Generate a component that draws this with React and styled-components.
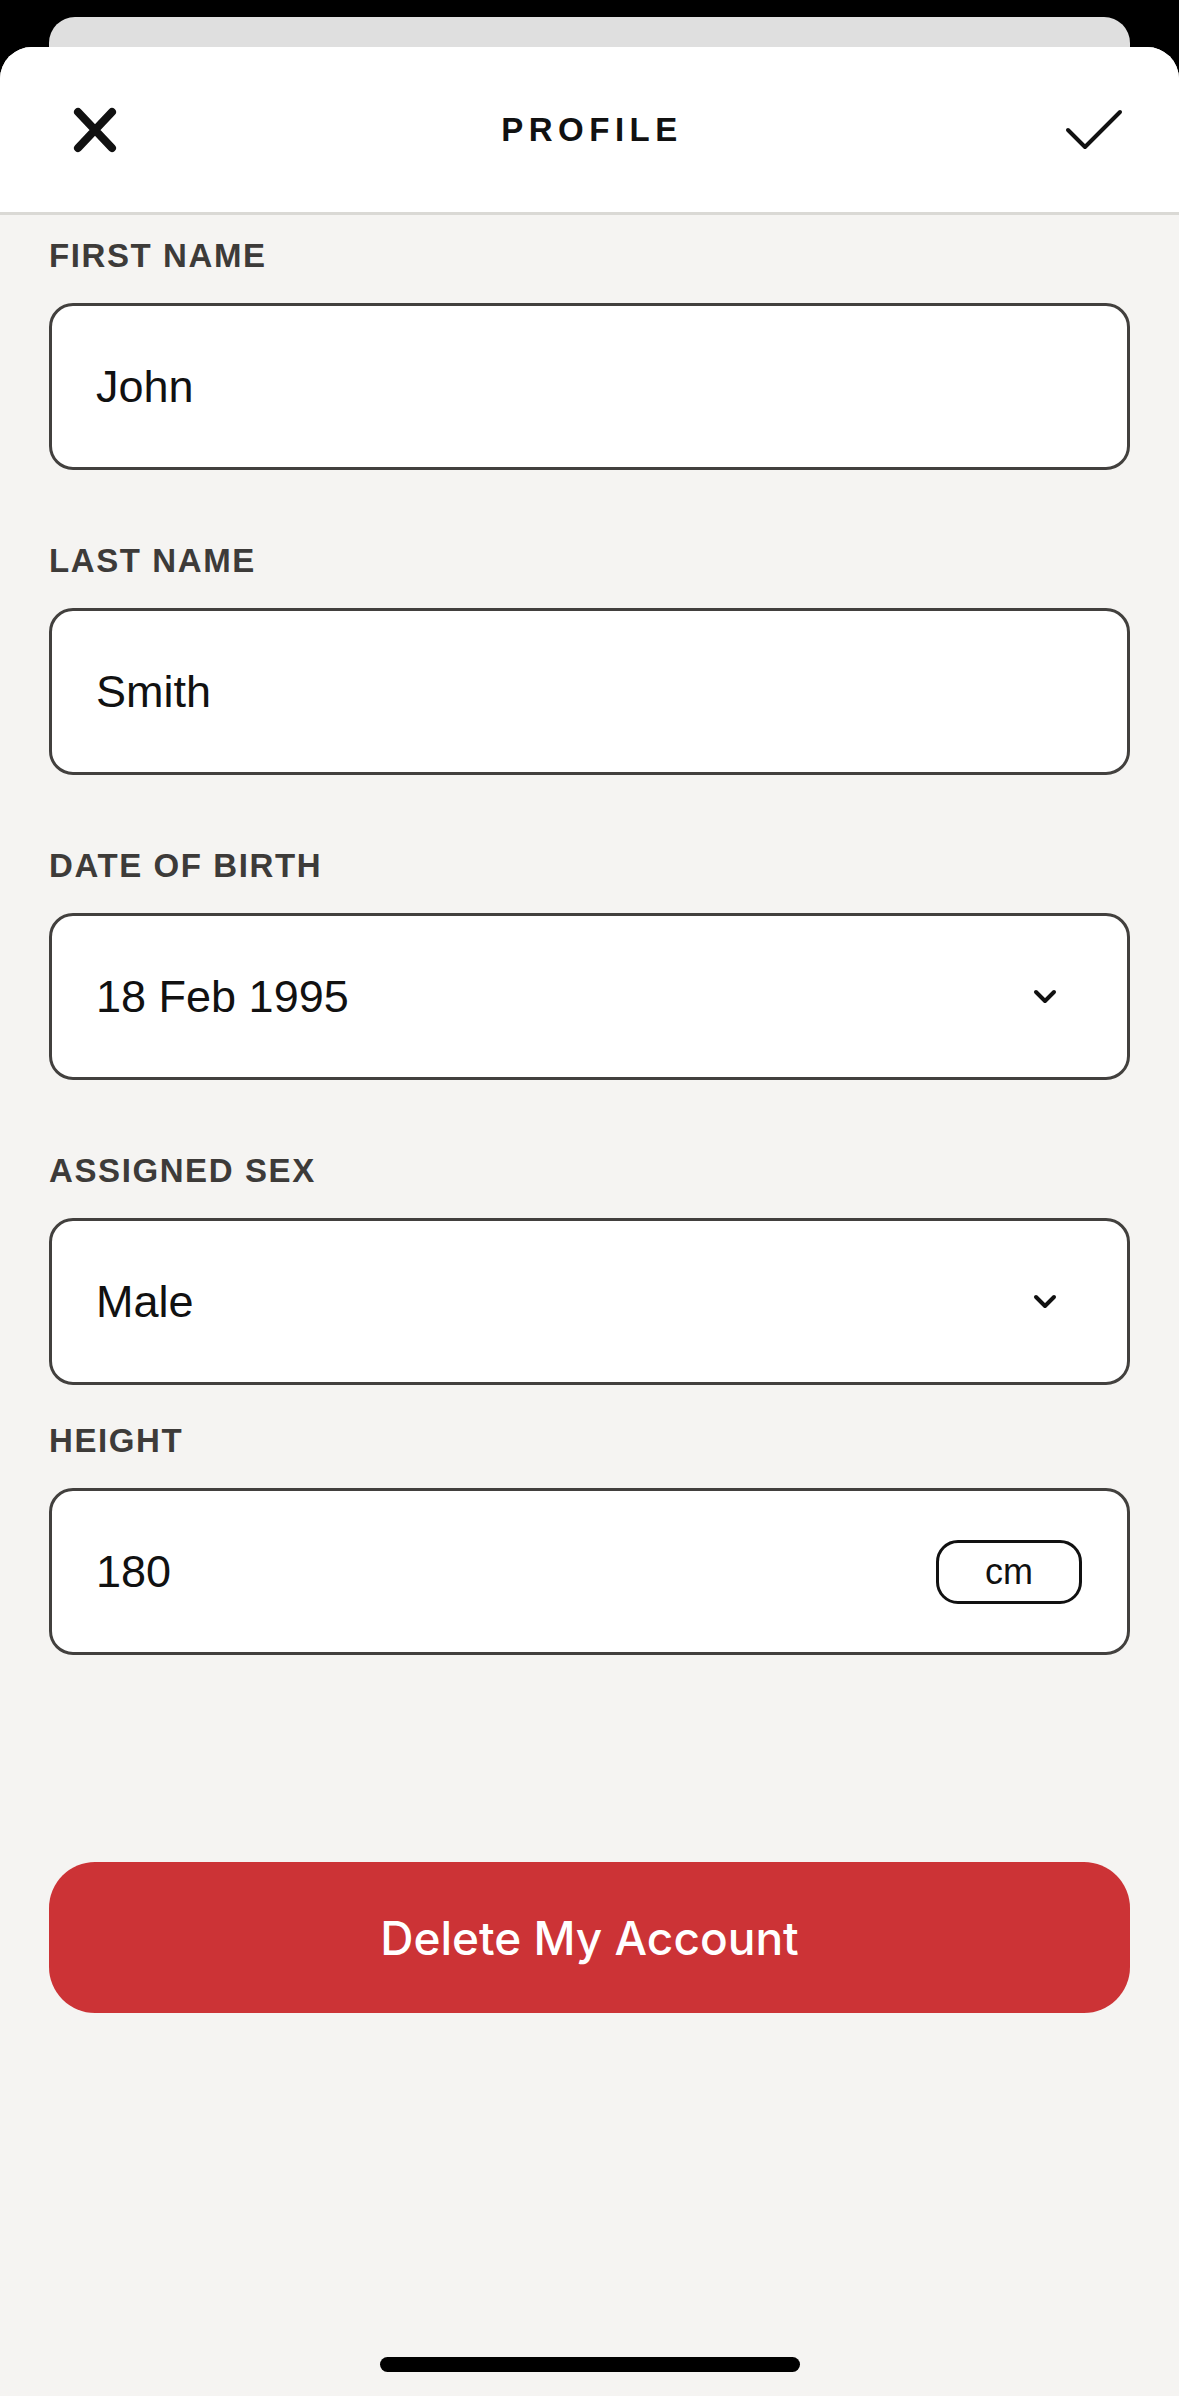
import React from "react";
import styled, { createGlobalStyle } from "styled-components";

const Global = createGlobalStyle`
  html, body { margin: 0; padding: 0; background: #000; }
  * { box-sizing: border-box; }
`;

const Screen = styled.div`
  min-height: 100vh;
  background: #000;
  display: flex;
  flex-direction: column;
  font-family: "Liberation Sans", Arial, sans-serif;
`;

const BackCard = styled.div`
  margin: 17px 49px 0;
  height: 30px;
  background: #dfdfdf;
  border-radius: 26px 26px 0 0;
`;

const Sheet = styled.div`
  flex: 1;
  display: flex;
  flex-direction: column;
  background: #f5f4f2;
  border-radius: 32px 32px 0 0;
  overflow: hidden;
`;

const Header = styled.header`
  height: 168px;
  background: #fff;
  border-bottom: 3px solid #dad9d5;
  display: grid;
  grid-template-columns: 1fr auto 1fr;
  align-items: center;
`;

const IconButton = styled.div`
  display: flex;
  justify-content: ${(p) => (p.$right ? "flex-end" : "flex-start")};
  padding: ${(p) => (p.$right ? "0 56px 0 0" : "0 0 0 73px")};
  svg { display: block; }
`;

const Title = styled.h1`
  margin: 0;
  font-family: "Liberation Sans", Arial, sans-serif;
  font-size: 33px;
  font-weight: 700;
  letter-spacing: 5.5px;
  color: #111;
  padding-left: 5px;
`;

const Form = styled.div`
  display: flex;
  flex-direction: column;
  padding: 24px 49px 0;
`;

const Field = styled.div`
  display: flex;
  flex-direction: column;
  gap: 30px;
  margin-bottom: ${(p) => p.$gap}px;
`;

const Label = styled.label`
  font-family: "Liberation Sans", Arial, sans-serif;
  font-size: 33px;
  line-height: 34px;
  font-weight: 700;
  letter-spacing: 1.6px;
  color: #3d3b39;
`;

const Box = styled.div`
  height: 167px;
  background: #fff;
  border: 3px solid #42403e;
  border-radius: 24px;
  display: flex;
  align-items: center;
  justify-content: space-between;
  padding: 0 45px 0 44px;
`;

const Value = styled.span`
  font-family: "Liberation Sans", Arial, sans-serif;
  font-size: 45px;
  color: #111;
`;

const Chevron = styled.svg`
  margin-right: 25px;
`;

const UnitPill = styled.span`
  width: 146px;
  height: 64px;
  border: 3px solid #111;
  border-radius: 22px;
  display: flex;
  align-items: center;
  justify-content: center;
  font-family: "Liberation Sans", Arial, sans-serif;
  font-size: 36px;
  font-weight: 500;
  color: #111;
`;

const DeleteButton = styled.button`
  margin: 207px 49px 0;
  height: 151px;
  border: none;
  border-radius: 46px;
  background: #cc3336;
  color: #fff;
  font-family: Inter, "Liberation Sans", sans-serif;
  font-size: 46px;
  font-weight: 500;
  cursor: pointer;
`;

const Spacer = styled.div`
  flex: 1;
`;

const HomeIndicator = styled.div`
  align-self: center;
  width: 420px;
  height: 15px;
  border-radius: 8px;
  background: #000;
  margin-bottom: 24px;
`;

const ChevronIcon = () => (
  <Chevron width="24" height="16" viewBox="0 0 24 16" fill="none">
    <path d="M3 3 L12 12 L21 3" stroke="#111" strokeWidth="4" strokeLinecap="round" strokeLinejoin="round" />
  </Chevron>
);

const fields = [
  { label: "FIRST NAME", value: "John", gap: 74 },
  { label: "LAST NAME", value: "Smith", gap: 74 },
  { label: "DATE OF BIRTH", value: "18 Feb 1995", select: true, gap: 74 },
  { label: "ASSIGNED SEX", value: "Male", select: true, gap: 39 },
  { label: "HEIGHT", value: "180", unit: "cm", gap: 0 },
];

export default function App() {
  return (
    <>
      <Global />
      <Screen>
        <BackCard />
        <Sheet>
          <Header>
            <IconButton>
              <svg width="44" height="46" viewBox="0 0 44 46" fill="none">
                <path d="M5 5 L39 41 M39 5 L5 41" stroke="#111" strokeWidth="8" strokeLinecap="round" />
              </svg>
            </IconButton>
            <Title>PROFILE</Title>
            <IconButton $right>
              <svg width="58" height="42" viewBox="0 0 58 42" fill="none">
                <path d="M3 21 L20 38 L55 3" stroke="#111" strokeWidth="4" strokeLinecap="round" strokeLinejoin="round" />
              </svg>
            </IconButton>
          </Header>
          <Form>
            {fields.map((f) => (
              <Field key={f.label} $gap={f.gap}>
                <Label>{f.label}</Label>
                <Box>
                  <Value>{f.value}</Value>
                  {f.select && <ChevronIcon />}
                  {f.unit && <UnitPill>{f.unit}</UnitPill>}
                </Box>
              </Field>
            ))}
          </Form>
          <DeleteButton>Delete My Account</DeleteButton>
          <Spacer />
          <HomeIndicator />
        </Sheet>
      </Screen>
    </>
  );
}
